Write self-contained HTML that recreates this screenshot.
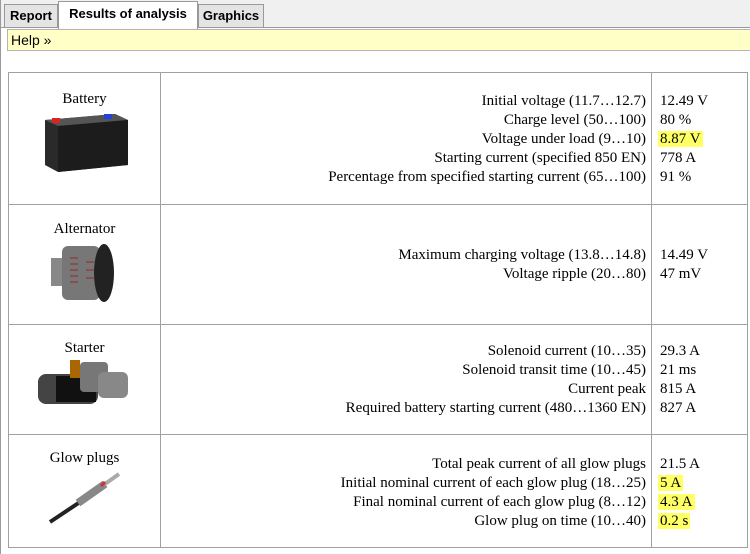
<!DOCTYPE html>
<html><head><style>
body{margin:0;width:750px;height:554px;background:#fff;position:relative;overflow:hidden;font-family:"Liberation Serif",serif;font-size:15px;color:#000}
.a{position:absolute}
.tab{position:absolute;font:bold 13px "Liberation Sans",sans-serif;border:1px solid #999;border-bottom:none;text-align:center;box-sizing:border-box}
.l{position:absolute;right:104px;text-align:right;white-space:nowrap;line-height:19px}
.v{position:absolute;left:660px;white-space:nowrap;line-height:19px}
.h{background:#ffff66;padding:0 2px;margin-left:-2px}
.t{position:absolute;width:151px;left:9px;text-align:center;line-height:19px}
</style></head><body>
<div class="a" style="left:0;top:0;width:750px;height:27px;background:#f0f0f0;border-bottom:1px solid #999"></div>
<div class="a" style="left:0;top:0;width:1px;height:554px;background:#999"></div>
<div class="tab" style="left:4px;top:4px;width:54px;height:23px;background:#e4e4e4;line-height:22px">Report</div>
<div class="tab" style="left:58px;top:1px;width:140px;height:28px;background:#fff;line-height:24px;z-index:2">Results of analysis</div>
<div class="tab" style="left:198px;top:4px;width:66px;height:23px;background:#e4e4e4;line-height:22px">Graphics</div>
<div class="a" style="left:7px;top:29px;width:745px;height:22px;box-sizing:border-box;background:#ffffc6;border:1px solid #b4b4b4;font:14px 'Liberation Sans',sans-serif;line-height:20px;padding-left:3px">Help »</div>

<div class="a" style="left:8px;top:72px;width:740px;height:476px;border:1px solid #a0a0a0;box-sizing:border-box"></div>
<div class="a" style="left:160px;top:72px;width:1px;height:476px;background:#a0a0a0"></div>
<div class="a" style="left:651px;top:72px;width:1px;height:476px;background:#a0a0a0"></div>
<div class="a" style="left:8px;top:204px;width:740px;height:1px;background:#a0a0a0"></div>
<div class="a" style="left:8px;top:324px;width:740px;height:1px;background:#a0a0a0"></div>
<div class="a" style="left:8px;top:434px;width:740px;height:1px;background:#a0a0a0"></div>

<div class="t" style="top:90px">Battery</div>
<svg class="a" style="left:40px;top:110px" width="90" height="65" viewBox="0 0 90 65">
<polygon points="5,10 75,4 88,10 88,55 18,62 5,55" fill="#2a2a2a"/>
<polygon points="5,10 75,4 88,10 18,16" fill="#555"/>
<rect x="12" y="8" width="8" height="5" fill="#d22"/><rect x="64" y="4" width="8" height="5" fill="#24d"/>
<polygon points="18,16 88,10 88,55 18,62" fill="#1c1c1c"/>
</svg>
<div class="l" style="top:92px">Initial voltage (11.7…12.7)<br>Charge level (50…100)<br>Voltage under load (9…10)<br>Starting current (specified 850 EN)<br>Percentage from specified starting current (65…100)</div>
<div class="v" style="top:92px">12.49 V<br>80 %<br><span class="h">8.87 V</span><br>778 A<br>91 %</div>

<div class="t" style="top:220px">Alternator</div>
<svg class="a" style="left:48px;top:240px" width="70" height="65" viewBox="0 0 70 65">
<rect x="3" y="18" width="14" height="28" fill="#888"/>
<rect x="14" y="6" width="38" height="54" rx="6" fill="#777"/>
<g stroke="#844" stroke-width="1.5"><line x1="22" y1="18" x2="30" y2="18"/><line x1="22" y1="24" x2="30" y2="24"/><line x1="22" y1="30" x2="30" y2="30"/><line x1="22" y1="36" x2="30" y2="36"/><line x1="22" y1="42" x2="30" y2="42"/><line x1="38" y1="22" x2="46" y2="22"/><line x1="38" y1="30" x2="46" y2="30"/><line x1="38" y1="38" x2="46" y2="38"/></g>
<ellipse cx="56" cy="33" rx="10" ry="29" fill="#222"/>
</svg>
<div class="l" style="top:246px">Maximum charging voltage (13.8…14.8)<br>Voltage ripple (20…80)</div>
<div class="v" style="top:246px">14.49 V<br>47 mV</div>

<div class="t" style="top:339px">Starter</div>
<svg class="a" style="left:36px;top:358px" width="100" height="50" viewBox="0 0 100 50">
<rect x="2" y="16" width="60" height="30" rx="8" fill="#444"/>
<rect x="20" y="18" width="40" height="26" fill="#111"/>
<rect x="44" y="4" width="28" height="30" rx="4" fill="#777"/>
<rect x="34" y="2" width="10" height="18" fill="#a60"/>
<rect x="62" y="14" width="30" height="26" rx="6" fill="#888"/>
</svg>
<div class="l" style="top:342px">Solenoid current (10…35)<br>Solenoid transit time (10…45)<br>Current peak<br>Required battery starting current (480…1360 EN)</div>
<div class="v" style="top:342px">29.3 A<br>21 ms<br>815 A<br>827 A</div>

<div class="t" style="top:449px">Glow plugs</div>
<svg class="a" style="left:45px;top:470px" width="80" height="55" viewBox="0 0 80 55">
<line x1="5" y1="52" x2="35" y2="32" stroke="#222" stroke-width="4"/>
<line x1="33" y1="33" x2="60" y2="14" stroke="#888" stroke-width="8"/>
<line x1="60" y1="14" x2="74" y2="4" stroke="#aaa" stroke-width="4"/>
<line x1="56" y1="16" x2="60" y2="12" stroke="#c33" stroke-width="3"/>
</svg>
<div class="l" style="top:455px">Total peak current of all glow plugs<br>Initial nominal current of each glow plug (18…25)<br>Final nominal current of each glow plug (8…12)<br>Glow plug on time (10…40)</div>
<div class="v" style="top:455px">21.5 A<br><span class="h">5 A</span><br><span class="h">4.3 A</span><br><span class="h">0.2 s</span></div>
</body></html>
